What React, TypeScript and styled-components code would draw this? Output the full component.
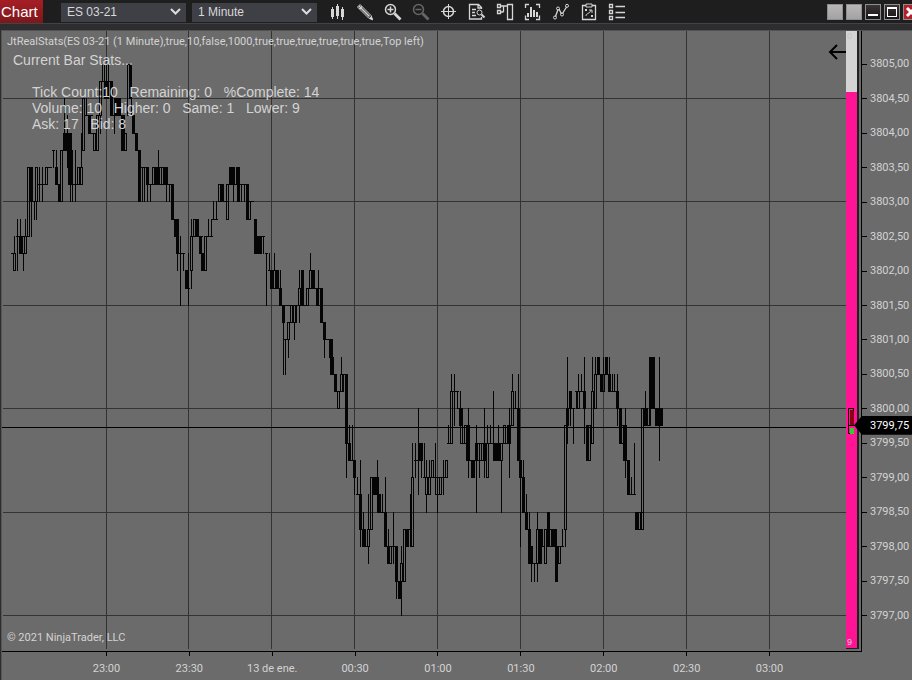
import React from 'react';
import styled, { createGlobalStyle, css } from 'styled-components';

const GlobalStyle = createGlobalStyle`
  *, *::before, *::after { box-sizing: border-box; }
  body {
    margin: 0;
    background: #2d2d30;
    font-family: "Liberation Sans", Arial, sans-serif;
  }
`;

const smallText = css`
  font-family: Roboto, "Liberation Sans", Arial, sans-serif;
  font-size: 11px;
  line-height: 14px;
`;

const Window = styled.div`
  display: flex;
  flex-direction: column;
  min-height: 100vh;
  overflow: hidden;
`;

const TitleBar = styled.header`
  display: flex;
  align-items: center;
  height: 24px;
  flex: none;
  background: #1e1e1e;
  border-bottom: 1px solid #434346;
  overflow: hidden;
`;

const Title = styled.h1`
  margin: 0 18px 0 0;
  width: 43px;
  flex: none;
  align-self: stretch;
  padding-left: 1px;
  background: linear-gradient(#a61e25, #7c171b);
  color: #fff;
  font-size: 15px;
  font-weight: 400;
  line-height: 23px;
`;

const Picker = styled.label`
  position: relative;
  flex: none;
  width: 125px;
  height: 19px;
  margin-right: 6px;
  svg {
    position: absolute;
    right: 5px;
    top: 5px;
    pointer-events: none;
  }
`;

const Select = styled.select`
  appearance: none;
  width: 100%;
  height: 19px;
  padding: 0 20px 0 6px;
  border: 0;
  border-radius: 0;
  background: #3f3f46;
  color: #d8d8d8;
  font: 12px/19px "Liberation Sans", Arial, sans-serif;
`;

const Tools = styled.div`
  display: flex;
  flex: none;
`;

const ToolButton = styled.button`
  display: flex;
  justify-content: center;
  align-items: center;
  width: 28px;
  height: 23px;
  padding: 0;
  border: 0;
  background: none;
  color: #d6d6d6;
  &:disabled { color: #666; }
`;

const WindowButtons = styled.div`
  display: flex;
  gap: 3px;
  margin: 0 -7px 0 auto;
`;

const WindowButton = styled.button<{ $kind: 'plain' | 'dark' | 'close' }>`
  display: flex;
  align-items: center;
  justify-content: center;
  flex: none;
  width: 16px;
  height: 16px;
  padding: 0;
  border: 1px solid #8e8e8e;
  background: linear-gradient(#bab7b9, #a5a2a4);
  ${p => p.$kind === 'dark' && css`background: linear-gradient(#393436, #181516);`}
  ${p => p.$kind === 'close' && css`background: #b32029;`}
`;

const ChartArea = styled.main`
  display: grid;
  grid-template-columns: minmax(0, 1fr) 13px 53px;
  grid-template-rows: minmax(0, 1fr) 29px;
  flex: 1;
  margin: 6px 0 0 1px;
  background: #6b6b6b;
  border-top: 1px solid #525252;
  border-left: 1px solid #565656;
  color: #d3d3d3;
`;

const Plot = styled.section`
  position: relative;
  min-height: 320px;
`;

const PlotCanvas = styled.svg`
  position: absolute;
  inset: 0;
  width: 100%;
  height: 100%;
`;

const Overlay = styled.div`
  position: absolute;
  left: 5px;
  top: 4px;
  white-space: pre;
`;

const Signature = styled.p`
  ${smallText}
  margin: 0;
`;

const Stats = styled.div`
  margin: 3px 0 0 6px;
  font-size: 14px;
  line-height: 16px;
`;

const StatsHeading = styled.p`
  margin: 0 0 16px;
`;

const StatsLine = styled.p`
  margin: 0 0 0 19px;
`;

const Copyright = styled.p`
  ${smallText}
  position: absolute;
  left: 5px;
  bottom: 6px;
  margin: 0;
`;

const BackArrow = styled.svg`
  position: absolute;
  right: -1px;
  top: 12px;
`;

const Meter = styled.aside`
  position: relative;
  display: flex;
  flex-direction: column;
  margin-bottom: 2px;
  border-right: 2px solid #222;
  border-bottom: 1px solid #222;
  font-size: 9px;
  line-height: 10px;
`;

const MeterEmpty = styled.div`
  height: 61px;
  padding-left: 1px;
  background: #d4d4d4;
  color: #c5c5c5;
`;

const MeterFill = styled.div`
  display: flex;
  flex: 1;
  align-items: flex-end;
  padding: 0 0 1px 1px;
  background: #ff1493;
`;

const MeterMark = styled.svg`
  position: absolute;
  left: 2px;
  top: 61%;
`;

const PriceAxis = styled.section`
  position: relative;
  display: flex;
  flex-direction: column;
  margin-left: 2px;
  padding: 16px 0 18px;
  border-left: 1px solid #000;
`;

const PriceLabel = styled.div`
  ${smallText}
  display: flex;
  flex: 1;
  align-items: center;
  gap: 3px;
  &::before {
    content: "";
    width: 5px;
    height: 1px;
    background: #000;
  }
`;

const LastPrice = styled.div`
  ${smallText}
  position: absolute;
  left: -8px;
  right: 0;
  top: calc(64% - 12px);
  height: 19px;
  padding-left: 16px;
  background: #000;
  clip-path: polygon(0 50%, 8px 0, 100% 0, 100% 100%, 8px 100%);
  color: #fff;
  line-height: 19px;
`;

const TimeAxis = styled.section`
  grid-column: 1 / 4;
  display: grid;
  grid-template-columns: repeat(9, minmax(0, 1fr));
  margin-right: 50px;
  padding: 0 51px 0 63px;
  border-top: 1px solid #000;
`;

const TimeLabel = styled.div`
  ${smallText}
  display: flex;
  flex-direction: column;
  align-items: center;
  gap: 6px;
  &::before {
    content: "";
    width: 1px;
    height: 4px;
    background: #000;
  }
`;

/* Price levels are counted in quarter-point ticks below 3805,00. */
const levelY = (tick: number) => Math.round(63.6 + 17.23 * tick);

/* left, right, top tick, bottom tick */
const FILLED = `19 22 10 11;29 32 6 8;55 57 6 7;58 60 7 8;63 66 4 5;68 71 4 7;69 72 5 7;88 90 3 4;104 108 1 2;110 112 1 3;
114 120 2 3;129 131 0 2;121 124 3 5;132 134 3 4;135 137 4 5;138 140 5 8;146 148 6 7;154 157 6 7;163 167 6 7;171 173 7 9;
174 178 9 10;176 178 10 11;185 188 12 13;195 198 9 10;199 201 10 11;201 204 11 12;220 223 7 8;229 234 6 7;236 239 6 7;
237 239 7 8;246 248 7 9;254 256 9 10;254 261 10 11;270 273 12 13;275 278 12 13;279 281 13 14;282 284 14 15;292 293 14 15;
295 296 14 15;301 303 12 14;311 314 12 13;316 317 13 14;320 322 13 15;323 325 15 16;329 332 16 17;330 333 17 18;
334 336 18 19;342 343 18 19;345 347 18 22;348 350 22 23;353 355 23 24;359 361 25 27;362 365 27 28;372 378 24 25;
377 380 25 26;384 386 26 28;387 389 28 29;395 397 28 30;398 401 30 31;402 403 29 30;406 407 27 28;410 411 25 28;
418 422 22 23;427 428 24 25;459 462 20 21;466 469 21 23;471 474 23 24;483 485 22 23;493 497 22 23;499 500 22 23;
507 510 21 22;517 519 20 23;519 521 23 24;522 524 24 26;525 527 26 27;528 530 27 29;530 532 28 29;538 541 27 29;
547 549 26 28;552 556 27 28;555 557 28 30;569 571 19 20;576 577 19 20;583 585 19 20;586 588 21 23;597 599 17 18;
600 602 18 19;605 607 17 18;608 610 18 19;616 618 19 20;619 621 20 22;623 626 21 23;627 629 23 25;635 638 26 27;
644 647 20 21;651 654 17 20;655 658 20 21;660 662 20 21;566 567 20 22`;

const HOLLOW = `13 15 11 12;22 26 10 11;35 37 6 8;60 62 5 8;77 82 6 7;82 84 2 5;93 95 4 5;96 98 3 5;99 101 1 3;127 131 0 3;
121 126 4 5;152 154 6 7;190 192 10 12;193 198 9 10;204 206 10 12;218 220 7 8;226 228 7 9;248 250 8 9;287 289 15 16;
290 296 14 15;298 300 13 14;306 308 13 14;318 320 13 14;337 339 19 20;340 342 18 19;367 369 27 28;370 372 24 27;
389 391 28 29;400 402 29 30;403 405 27 30;411 413 24 28;425 430 24 25;431 433 23 24;435 437 24 25;439 441 24 25;
445 447 23 24;450 452 19 22;464 466 21 22;475 477 22 23;486 488 22 24;498 502 22 23;503 505 21 22;511 513 19 21;
536 538 27 29;544 546 27 29;558 560 28 29;564 566 21 27;576 579 19 20;588 590 21 23;591 593 19 22;594 596 18 20;
602 604 18 19;621 623 21 22;638 640 26 27;641 643 20 27;649 650 17 21`;

/* x, top tick, bottom tick */
const WICKS = `14 10 11;17 9 12;20 9 10;23 11 12;24 10 11;25 9 10;27 6 10;29 6 10;31 8 10;34 8 9;36 8 9;39 6 8;42 6 8;45 6 7;
47 6 7;53 5 6;56 5 6;64 2 5;67 3 6;70 7 8;72 6 8;75 5 8;79 6 7;80 6 7;81 4 6;86 2 3;100 3 4;102 0 1;104 0 1;106 0 1;108 0 1;
114 3 4;142 6 8;144 6 8;147 7 8;150 7 8;158 5 7;159 6 7;161 6 7;166 7 8;169 7 8;177 11 12;180 10 14;183 11 12;188 11 14;
191 9 10;191 12 13;208 9 10;211 9 10;213 8 9;216 8 9;233 7 8;241 7 8;244 7 8;263 10 11;266 11 14;269 11 12;274 11 12;
280 12 13;283 15 18;285 16 18;288 16 17;294 15 16;299 12 13;299 14 15;309 12 13;310 11 12;318 12 13;324 16 17;341 17 18;
346 22 24;349 21 22;352 21 23;354 24 25;357 24 25;360 23 25;360 27 28;363 26 27;368 25 27;368 28 29;377 23 24;382 25 26;
385 24 26;388 27 28;393 26 29;396 30 31;401 28 29;401 30 32;408 27 28;412 22 24;415 22 24;418 20 25;421 23 24;424 22 24;
426 23 24;426 25 26;429 23 24;435 22 25;437 25 26;443 23 25;448 21 22;451 18 19;454 18 21;457 19 20;460 19 20;460 21 22;
462 21 22;468 20 21;468 23 24;476 21 26;479 22 24;481 22 23;484 20 22;484 23 24;487 21 22;490 21 22;493 19 22;498 21 22;
501 23 26;509 20 21;509 22 24;512 18 19;515 19 20;518 18 20;520 24 28;523 23 24;526 25 26;529 26 27;531 29 30;534 29 30;
537 29 30;537 26 27;542 27 28;551 27 28;562 27 28;565 27 28;567 17 22;568 20 21;570 20 21;573 20 22;578 18 19;581 18 19;
584 17 19;584 20 22;592 17 19;595 17 18;603 17 18;609 17 18;612 18 19;614 18 19;617 18 19;617 20 21;625 20 21;625 23 24;
631 24 25;634 22 25;645 19 20;659 17 23`;

/* left, right, tick */
const LEDGES = `11 15 11;16 29 10;19 26 11;27 32 6;29 37 8;37 47 7;46 51 6;52 54 5;60 64 5;70 82 7;84 92 3;88 96 4;99 112 1;
110 124 3;140 148 6;146 154 7;152 167 6;152 173 7;176 184 11;185 189 13;190 202 10;204 212 10;212 217 9;218 228 8;226 248 7;
248 253 8;254 264 10;265 267 11;268 278 12;270 281 13;284 289 16;282 308 14;309 314 12;306 322 13;316 322 14;323 332 16;
334 343 19;340 347 18;348 355 23;356 361 25;362 369 28;367 372 27;377 386 26;384 397 28;387 391 29;395 405 30;403 411 27;
414 422 23;423 437 24;438 445 24;435 441 25;447 452 22;450 458 19;457 462 20;460 466 22;467 485 23;475 510 22;493 502 23;
514 519 20;522 524 24;528 541 29;541 544 28;544 556 27;547 563 28;566 574 20;575 585 19;594 610 18;608 618 19;619 626 22;
621 626 21;627 635 25;635 643 26;635 643 27;641 647 20;644 650 21;655 662 20;655 662 21;649 654 17`;

const parse = (text: string) => text.split(';').map(item => item.trim().split(/\s+/).map(Number));

const solidPath =
  parse(FILLED).map(([a, b, t, u]) => `M${a} ${levelY(t)}H${b + 1}V${levelY(u) + 1}H${a}Z`).join('') +
  parse(WICKS).map(([x, t, u]) => `M${x} ${levelY(t)}h1V${levelY(u) + 1}h-1Z`).join('') +
  parse(LEDGES).map(([a, b, t]) => `M${a} ${levelY(t)}H${b + 1}v1H${a}Z`).join('');

const hollowPath = parse(HOLLOW)
  .map(([a, b, t, u]) => `M${a + 0.5} ${levelY(t) + 0.5}H${b + 0.5}V${levelY(u) + 0.5}H${a + 0.5}Z`)
  .join('');

const GRID_X = [106, 188, 271, 354, 437, 520, 603, 686, 769];
const GRID_TICKS = [2, 8, 14, 20, 26, 32];
const gridPath =
  GRID_X.map(x => `M${x} 31h1V649h-1Z`).join('') +
  GRID_TICKS.map(t => `M3 ${levelY(t)}H846v1H3Z`).join('');

const PRICES = Array.from({ length: 17 }, (_, i) => (3805 - i / 2).toFixed(2).replace('.', ','));
const TIMES = ['23:00', '23:30', '13 de ene.', '00:30', '01:00', '01:30', '02:00', '02:30', '03:00'];

const Chevron = () => (
  <svg width="11" height="9" viewBox="0 0 11 9" fill="none" stroke="#dcdcdc" strokeWidth="2">
    <path d="M1 2l4.5 4.5L10 2" />
  </svg>
);

type Tool = { label: string; disabled?: boolean; art: React.ReactNode };

const TOOLS: Tool[] = [
  {
    label: 'Chart style',
    art: <path fill="currentColor" stroke="none" d="M3 6h1V4h1v2h1v8H5v2H4v-2H3zM8 3h1V1h1v2h1v10h-1v3H9v-3H8zM13 6h1V4h1v2h1v8h-1v3h-1v-3h-1z" />,
  },
  {
    label: 'Drawing tools',
    art: (
      <>
        <path d="M1.500 4L4 1.500L15 12.500L16.500 16.500L12.500 15z" />
        <path d="M3 3L13.500 13.500M3.500 6l2.500-2.500" strokeWidth="1.500" />
        <path d="M13 15.500l2.500-2.500 1.500 4.500z" fill="currentColor" stroke="none" />
      </>
    ),
  },
  {
    label: 'Zoom in',
    art: (
      <>
        <circle cx="6.5" cy="6.5" r="5" strokeWidth="1.5" />
        <path d="M3.5 6.5h6M6.5 3.5v6" strokeWidth="1.5" />
        <path d="M10.5 10.5l6 6" strokeWidth="2.8" />
      </>
    ),
  },
  {
    label: 'Zoom out',
    disabled: true,
    art: (
      <>
        <circle cx="6.5" cy="6.5" r="5" strokeWidth="1.5" />
        <path d="M3.5 6.5h6" strokeWidth="1.5" />
        <path d="M10.5 10.5l6 6" strokeWidth="2.8" />
      </>
    ),
  },
  {
    label: 'Cross hair',
    art: (
      <>
        <circle cx="8.5" cy="8.5" r="5" strokeWidth="1.5" />
        <path d="M8.5 1v15M1 8.5h15" />
      </>
    ),
  },
  {
    label: 'Data box',
    art: (
      <>
        <path d="M13.5 6V4.5l-3-3h-9v14.500h12V14M10 1.500V5h3.500M4 6.500h4M4 9.500h3M4 12.500h4" strokeWidth="1.300" />
        <circle cx="11.500" cy="9.500" r="2.500" />
        <path d="M13.500 11.500l3 3" strokeWidth="2" />
      </>
    ),
  },
  {
    label: 'Chart trader',
    art: <path d="M1.500 1.500h3v3h-3zM1.500 7.500h3v3h-3zM11.500 1.500h5v15h-5zM4.500 3h7M7.500 3v6M4.500 9h3" strokeWidth="1.300" />,
  },
  {
    label: 'Data series',
    art: (
      <>
        <path d="M1.500 5V1.500H5M12 1.500h3.500V5M1.500 12.500v4H5M12 16.500h3.500v-4" strokeWidth="1.300" />
        <path d="M3 10h2v4H3zM6 4h2v10H6zM9 7h2v7H9zM12 9h2v5h-2z" fill="currentColor" stroke="none" />
      </>
    ),
  },
  {
    label: 'Indicators',
    art: (
      <>
        <path d="M3.500 13.500L6 6.500M7 6l2.500 5M10.500 10.500L14.500 4" strokeWidth="1.300" />
        <circle cx="3" cy="14.500" r="1.500" />
        <circle cx="6" cy="5.500" r="1.500" />
        <circle cx="10" cy="11.500" r="1.500" />
        <circle cx="15" cy="2.800" r="1.500" />
      </>
    ),
  },
  {
    label: 'Strategies',
    art: (
      <>
        <path d="M2.500 2.500h13v14h-13z" strokeWidth="1.300" />
        <path d="M6 1h6v3H6z" fill="#1e1e1e" />
        <path d="M5 6l2 2M7 6L5 8M11 12l2 2M13 12l-2 2M6 13c0-3 4-2 5-6M9 7h3v3" />
      </>
    ),
  },
  {
    label: 'Properties',
    art: <path d="M1.500 1.500h3v3h-3zM1.500 7.500h3v3h-3zM1.500 13.500h3v3h-3zM7.500 3.500H17M7.500 9.500H17M7.500 14.500H17" strokeWidth="1.300" />,
  },
];

export default function App() {
  return (
    <Window>
      <GlobalStyle />
      <TitleBar>
        <Title>Chart</Title>
        <Picker>
          <Select aria-label="Instrument" defaultValue="ES 03-21">
            <option>ES 03-21</option>
          </Select>
          <Chevron />
        </Picker>
        <Picker>
          <Select aria-label="Interval" defaultValue="1 Minute">
            <option>1 Minute</option>
          </Select>
          <Chevron />
        </Picker>
        <Tools>
          {TOOLS.map(tool => (
            <ToolButton key={tool.label} type="button" aria-label={tool.label} disabled={tool.disabled}>
              <svg width="18" height="18" viewBox="0 0 18 18" fill="none" stroke="currentColor">
                {tool.art}
              </svg>
            </ToolButton>
          ))}
        </Tools>
        <WindowButtons>
          <WindowButton $kind="plain" type="button" aria-label="Link instrument" />
          <WindowButton $kind="plain" type="button" aria-label="Link interval" />
          <WindowButton $kind="dark" type="button" aria-label="Minimize">
            <svg width="14" height="14"><path d="M2 9h10v2H2z" fill="#fff" /></svg>
          </WindowButton>
          <WindowButton $kind="dark" type="button" aria-label="Maximize">
            <svg width="14" height="14"><path d="M2 2h10v10H2zM3 4v7h8V4z" fill="#fff" fillRule="evenodd" /></svg>
          </WindowButton>
          <WindowButton $kind="close" type="button" aria-label="Close">
            <svg width="14" height="14"><path d="M3 3l8 8M11 3l-8 8" stroke="#fff" strokeWidth="3" /></svg>
          </WindowButton>
        </WindowButtons>
      </TitleBar>

      <ChartArea>
        <Plot>
          <PlotCanvas viewBox="2 31 844 620" preserveAspectRatio="none" shapeRendering="crispEdges" role="img" aria-label="Price chart">
            <path d={gridPath} fill="#333" />
            <path d="M2 427H846v1H2Z" fill="#000" />
            <path d={solidPath} fill="#050505" />
            <path d={hollowPath} fill="none" stroke="#050505" />
          </PlotCanvas>
          <Overlay>
            <Signature>JtRealStats(ES 03-21 (1 Minute),true,10,false,1000,true,true,true,true,true,true,Top left)</Signature>
            <Stats>
              <StatsHeading>Current Bar Stats...</StatsHeading>
              <StatsLine>{'Tick Count:10   Remaining: 0   %Complete: 14'}</StatsLine>
              <StatsLine>{'Volume: 10   Higher: 0   Same: 1   Lower: 9'}</StatsLine>
              <StatsLine>{'Ask: 17   Bid: 8'}</StatsLine>
            </Stats>
          </Overlay>
          <BackArrow width="20" height="18" viewBox="0 0 20 18" fill="none" stroke="#000" strokeWidth="2">
            <path d="M2.500 9H20M10 2L3 9l7 7" />
          </BackArrow>
          <Copyright>© 2021 NinjaTrader, LLC</Copyright>
        </Plot>
        <Meter>
          <MeterEmpty>0</MeterEmpty>
          <MeterFill>9</MeterFill>
          <MeterMark width="11" height="28" viewBox="0 0 11 28" shapeRendering="crispEdges">
            <path d="M2 3h4v16H2z" fill="#8b0010" />
            <path d="M2 21h4v6H2z" fill="#32cd32" />
            <path d="M6 1.500H.5v25H2" fill="none" stroke="#000" />
            <path d="M0 18h9v1H0zM5 1h1v3H5z" fill="#000" />
          </MeterMark>
        </Meter>
        <PriceAxis>
          {PRICES.map(price => <PriceLabel key={price}>{price}</PriceLabel>)}
          <LastPrice>3799,75</LastPrice>
        </PriceAxis>
        <TimeAxis>
          {TIMES.map(time => <TimeLabel key={time}>{time}</TimeLabel>)}
        </TimeAxis>
      </ChartArea>
    </Window>
  );
}
